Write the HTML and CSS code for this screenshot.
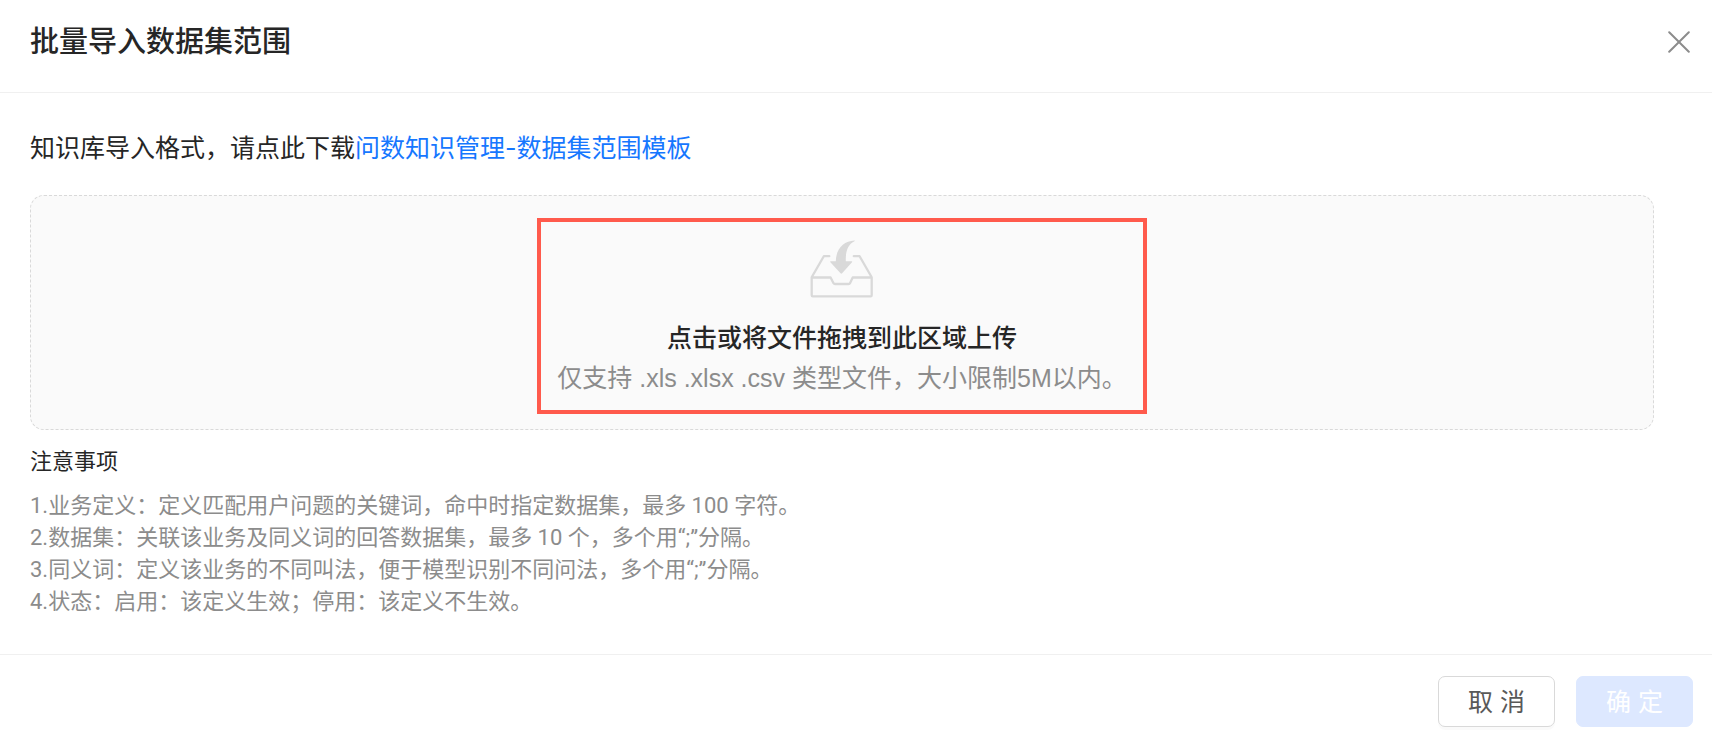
FILE: index.html
```
<!DOCTYPE html>
<html lang="zh-CN">
<head>
  <meta charset="UTF-8" />
  <title>批量导入数据集范围</title>
  <meta name="viewport" content="width=device-width, initial-scale=1.0" />
  <link rel="stylesheet" href="styles.css">
</head>
<body>
  <div class="modal" role="dialog" aria-labelledby="modal-title">
    <header class="modal-header">
      <h1 class="modal-title" id="modal-title">批量导入数据集范围</h1>
      <button class="close" type="button" aria-label="关闭">
        <svg viewBox="0 0 22 22" width="22" height="22">
          <path d="M1.2 1.2 20.8 20.8M20.8 1.2 1.2 20.8" />
        </svg>
      </button>
    </header>

    <main class="modal-body">
      <p class="intro">知识库导入格式，请点此下载<a class="template-link" href="#">问数知识管理-数据集范围模板</a></p>

      <!-- Upload area -->
      <label class="dragger" for="file">
        <input class="file-input" type="file" id="file" accept=".xls,.xlsx,.csv" />
        <span class="dragger-box">
          <svg class="inbox" viewBox="0 0 64 60" width="64" height="60">
            <path class="tray" d="M19.3 17.2H13.8L1.7 38.3V56.2Q1.7 57.3 2.8 57.3H60.6Q61.7 57.3 61.7 56.2V38.3L49.6 17.2H43.8M1.7 38.5H20.6L23.5 44.2Q24 45 25 45H38.6Q39.6 45 40 44.2L42.7 38.5H61.7" />
            <path class="arrow" d="M44.3 1.5C34 2 26 9.5 25.8 22.3H20.8Q19.6 22.4 20.4 23.3L30.5 34.3Q31.3 35 32.1 34.3L42 23.3Q42.7 22.4 41.6 22.3H35.8C35.5 13 37.5 5.5 44.8 2Q45.2 1.5 44.3 1.5Z" />
          </svg>
          <span class="dragger-text">点击或将文件拖拽到此区域上传</span>
          <span class="dragger-hint">仅支持 .xls .xlsx .csv 类型文件，大小限制5M以内。</span>
        </span>
      </label>

      <!-- Notes -->
      <section class="notes">
        <h2 class="notes-title">注意事项</h2>
        <p>1.业务定义：定义匹配用户问题的关键词，命中时指定数据集，最多 100 字符。</p>
        <p>2.数据集：关联该业务及同义词的回答数据集，最多 10 个，多个用“;”分隔。</p>
        <p>3.同义词：定义该业务的不同叫法，便于模型识别不同问法，多个用“;”分隔。</p>
        <p>4.状态：启用：该定义生效；停用：该定义不生效。</p>
      </section>
    </main>

    <footer class="modal-footer">
      <button class="btn" type="button">取 消</button>
      <button class="btn btn-primary" type="button" disabled>确 定</button>
    </footer>
  </div>
</body>
</html>
```
FILE: styles.css
```
* {
  margin: 0;
  padding: 0;
  box-sizing: border-box;
}
body {
  font-family: "Liberation Sans", "Noto Sans CJK SC", sans-serif;
  font-size: 25px;
  line-height: 40px;
  color: #262626;
  background: #fff;
}

.modal {
  display: flex;
  flex-direction: column;
  min-height: 100vh;
}

/* Header */
.modal-header {
  display: flex;
  align-items: center;
  justify-content: space-between;
  padding: 22px 22px 30px 30px;
  border-bottom: 1px solid #f0f0f0;
}
.modal-title {
  font-size: 29px;
  font-weight: 500;
}
.close {
  display: flex;
  border: none;
  background: none;
  cursor: pointer;
}
.close svg {
  fill: none;
  stroke: #8c8c8c;
  stroke-width: 2;
  stroke-linecap: round;
}

/* Body */
.modal-body {
  flex: 1;
  padding: 35px 58px 24px 30px;
}
.intro {
  margin-bottom: 27px;
  font-family: Inter, "Noto Sans CJK SC", sans-serif;
}
.template-link {
  color: #1677ff;
  text-decoration: none;
}

.dragger {
  display: flex;
  justify-content: center;
  padding: 22px 16px 15px;
  border: 1px dashed #d9d9d9;
  border-radius: 14px;
  background: #fafafa;
  cursor: pointer;
}
.file-input {
  position: absolute;
  opacity: 0;
  width: 1px;
  height: 1px;
}
.dragger-box {
  display: flex;
  flex-direction: column;
  align-items: center;
  padding: 17px 16px 12px;
  border: 4px solid #ff5a4c;
}
.inbox {
  margin-bottom: 19px;
}
.tray {
  fill: none;
  stroke: #d9d9d9;
  stroke-width: 2.3;
  stroke-linecap: round;
  stroke-linejoin: round;
}
.arrow {
  fill: #d9d9d9;
}
.dragger-text {
  font-weight: 500;
}
.dragger-hint {
  color: #8c8c8c;
}

.notes {
  margin-top: 12px;
  font-family: Roboto, "Noto Sans CJK SC", sans-serif;
  font-size: 22px;
  line-height: 32px;
  color: #8c8c8c;
}
.notes-title {
  margin-bottom: 8px;
  font-size: 22px;
  font-weight: 400;
  line-height: 40px;
  color: #262626;
}

/* Footer */
.modal-footer {
  display: flex;
  justify-content: flex-end;
  gap: 21px;
  padding: 21px 19px 15px;
  border-top: 1px solid #f0f0f0;
}
.btn {
  min-width: 117px;
  height: 51px;
  border: 1px solid #d9d9d9;
  border-radius: 7px;
  font: inherit;
  color: #595959;
  background: #fff;
  box-shadow: 0 3px 0 rgba(0, 0, 0, 0.02);
  cursor: pointer;
}
.btn-primary {
  border-color: #dde8ff;
  color: #fff;
  background: #dde8ff;
  box-shadow: none;
}
```
